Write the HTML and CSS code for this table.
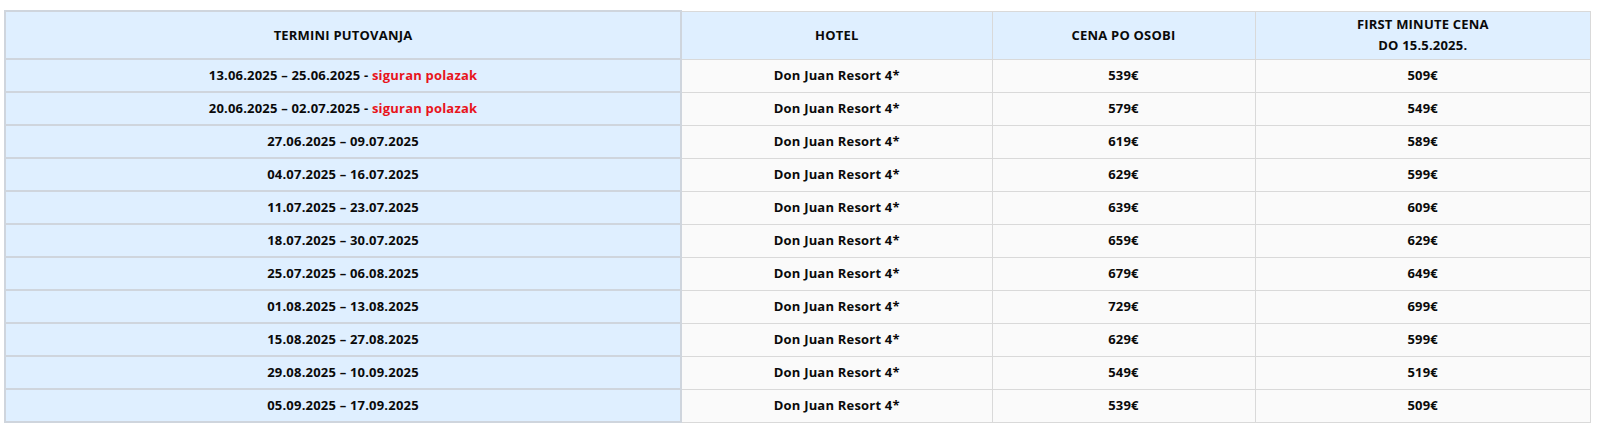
FILE: index.html
```html
<!DOCTYPE html>
<html lang="sr">
<head>
<meta charset="utf-8">
<title>Termini putovanja</title>
<link rel="stylesheet" href="styles.css">
</head>
<body>
<div class="wrap">
<table class="prices">
  <colgroup>
    <col class="c1"><col class="c2"><col class="c3"><col class="c4">
  </colgroup>
  <thead>
    <tr>
      <th class="term">TERMINI PUTOVANJA</th>
      <th>HOTEL</th>
      <th>CENA PO OSOBI</th>
      <th>FIRST MINUTE CENA<br>DO 15.5.2025.</th>
    </tr>
  </thead>
  <tbody>
    <tr><td class="term">13.06.2025 – 25.06.2025 - <span class="sure">siguran polazak</span></td><td>Don Juan Resort 4*</td><td>539€</td><td>509€</td></tr>
    <tr><td class="term">20.06.2025 – 02.07.2025 - <span class="sure">siguran polazak</span></td><td>Don Juan Resort 4*</td><td>579€</td><td>549€</td></tr>
    <tr><td class="term">27.06.2025 – 09.07.2025</td><td>Don Juan Resort 4*</td><td>619€</td><td>589€</td></tr>
    <tr><td class="term">04.07.2025 – 16.07.2025</td><td>Don Juan Resort 4*</td><td>629€</td><td>599€</td></tr>
    <tr><td class="term">11.07.2025 – 23.07.2025</td><td>Don Juan Resort 4*</td><td>639€</td><td>609€</td></tr>
    <tr><td class="term">18.07.2025 – 30.07.2025</td><td>Don Juan Resort 4*</td><td>659€</td><td>629€</td></tr>
    <tr><td class="term">25.07.2025 – 06.08.2025</td><td>Don Juan Resort 4*</td><td>679€</td><td>649€</td></tr>
    <tr><td class="term">01.08.2025 – 13.08.2025</td><td>Don Juan Resort 4*</td><td>729€</td><td>699€</td></tr>
    <tr><td class="term">15.08.2025 – 27.08.2025</td><td>Don Juan Resort 4*</td><td>629€</td><td>599€</td></tr>
    <tr><td class="term">29.08.2025 – 10.09.2025</td><td>Don Juan Resort 4*</td><td>549€</td><td>519€</td></tr>
    <tr><td class="term">05.09.2025 – 17.09.2025</td><td>Don Juan Resort 4*</td><td>539€</td><td>509€</td></tr>
  </tbody>
</table>
</div>
</body>
</html>
```
FILE: styles.css
```css
html, body {
  margin: 0;
  padding: 0;
  background: #ffffff;
}

.wrap {
  padding: 10px 6px 0 4px;
}

.prices {
  width: 100%;
  border-collapse: collapse;
  font-family: "Open Sans", "Noto Sans", Arial, sans-serif;
  font-size: 13px;
  letter-spacing: 0.2px;
  font-weight: 700;
  color: #0a0a0a;
  table-layout: fixed;
}

.c1 { width: 676px; }
.c2 { width: 311px; }
.c3 { width: 263px; }
.c4 { width: auto; }

.prices th,
.prices td {
  border: 1px solid #d9d9d9;
  text-align: center;
  line-height: 21px;
}

.prices th {
  background: #dfefff;
  padding: 2px 8px;
  height: 42px;
}

.prices td {
  background: #fafafa;
  padding: 5px 8px;
  height: 21px;
}

.prices .term {
  background: #dfefff;
  border: 2px solid #cfd5dd;
}

.sure {
  color: #e8141c;
}
```
